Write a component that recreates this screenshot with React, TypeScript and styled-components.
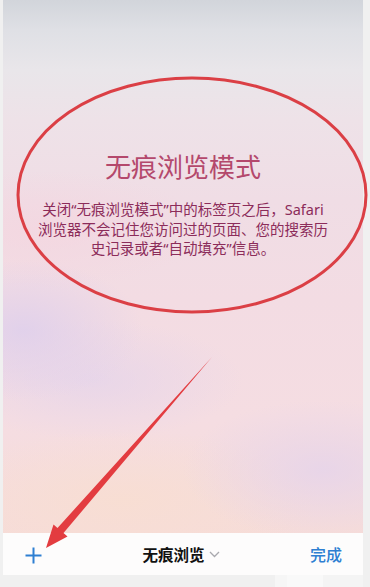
import React from "react";
import styled, { createGlobalStyle } from "styled-components";

const GlobalStyle = createGlobalStyle`
  html, body {
    margin: 0;
    padding: 0;
    background: #f0f0f0;
  }
  body {
    font-family: "Noto Sans", "Noto Sans CJK SC", "Liberation Sans", sans-serif;
  }
`;

const Page = styled.div`
  position: relative;
  width: 370px;
  height: 587px;
  overflow: hidden;
  background: #f0f0f0;
  display: flex;
  flex-direction: column;
`;

const Screen = styled.div`
  margin-left: 3px;
  width: 360px;
  height: 575px;
  display: flex;
  flex-direction: column;
`;

const Content = styled.div`
  flex: 1;
  display: flex;
  flex-direction: column;
  align-items: center;
  padding-top: 150px;
  box-sizing: border-box;
  background:
    radial-gradient(ellipse 120px 70px at 20px 330px, rgba(222, 207, 236, 0.85), rgba(222, 207, 236, 0) 100%),
    radial-gradient(ellipse 150px 60px at 90px 380px, rgba(226, 211, 236, 0.65), rgba(226, 211, 236, 0) 100%),
    radial-gradient(ellipse 140px 70px at 320px 470px, rgba(230, 212, 234, 0.85), rgba(230, 212, 234, 0) 100%),
    radial-gradient(ellipse 200px 70px at 120px 500px, rgba(248, 222, 210, 0.9), rgba(248, 222, 210, 0) 100%),
    radial-gradient(ellipse 160px 60px at 40px 230px, rgba(244, 214, 224, 0.8), rgba(244, 214, 224, 0) 100%),
    linear-gradient(
      to bottom,
      #d2d5db 0px,
      #dfe0e5 30px,
      #e9e6ea 70px,
      #eee2e8 120px,
      #f0dde5 200px,
      #f3dce3 300px,
      #f5dde2 420px,
      #f6dcd9 533px
    );
`;

const Title = styled.h1`
  margin: 0;
  font-family: "Noto Sans CJK SC", sans-serif;
  font-size: 26px;
  line-height: 32px;
  font-weight: 400;
  color: #b4486c;
`;

const Description = styled.div`
  margin-top: 18px;
  display: flex;
  flex-direction: column;
  align-items: center;
  font-size: 14.5px;
  line-height: 19.5px;
  color: #8c2c5a;
`;

const Line = styled.span`
  white-space: nowrap;
`;

const Toolbar = styled.div`
  height: 42px;
  background: #fdfcfc;
  display: grid;
  grid-template-columns: 1fr auto 1fr;
  align-items: center;
  padding: 0 21px;
`;

const PlusButton = styled.button`
  justify-self: start;
  width: 19px;
  height: 19px;
  padding: 0;
  border: 0;
  background: none;
  margin-top: 3px;
  display: flex;
`;

const TabTitle = styled.div`
  display: flex;
  align-items: center;
  gap: 4px;
  font-family: "Noto Sans CJK SC", sans-serif;
  font-size: 15.5px;
  font-weight: 700;
  color: #111;
  margin-left: -4px;
`;

const Done = styled.button`
  justify-self: end;
  border: 0;
  background: none;
  padding: 0;
  font-family: "Noto Sans CJK SC", sans-serif;
  font-size: 16px;
  font-weight: 500;
  color: #2e7fd2;
`;

const Footer = styled.div`
  height: 12px;
  display: flex;
  justify-content: flex-end;
`;

const Smudge = styled.div<{ $w: number; $tone: string }>`
  width: ${(p) => p.$w}px;
  background: ${(p) => p.$tone};
`;

const Annotations = styled.svg`
  position: absolute;
  top: 0;
  left: 0;
  pointer-events: none;
`;

const lines = [
  "关闭“无痕浏览模式”中的标签页之后，Safari",
  "浏览器不会记住您访问过的页面、您的搜索历",
  "史记录或者“自动填充”信息。",
];

const App = () => {
  return (
    <>
      <GlobalStyle />
      <Page>
        <Screen>
          <Content>
            <Title>无痕浏览模式</Title>
            <Description>
              {lines.map((l) => (
                <Line key={l}>{l}</Line>
              ))}
            </Description>
          </Content>
          <Toolbar>
            <PlusButton aria-label="新建">
              <svg width="19" height="19" viewBox="0 0 19 19">
                <path d="M9.5 1.5v16M1.5 9.5h16" stroke="#2e7fd2" strokeWidth="2" fill="none" />
              </svg>
            </PlusButton>
            <TabTitle>
              无痕浏览
              <svg width="11" height="7" viewBox="0 0 11 7">
                <path d="M1 1l4.5 4.5L10 1" stroke="#a9a9ae" strokeWidth="1.3" fill="none" />
              </svg>
            </TabTitle>
            <Done>完成</Done>
          </Toolbar>
        </Screen>
        <Footer>
          <Smudge $w={12} $tone="#f6f6f6" />
          <Smudge $w={36} $tone="#f9f9f9" />
          <Smudge $w={40} $tone="#f4f4f4" />
          <Smudge $w={7} $tone="#f0f0f0" />
        </Footer>
        <Annotations width="370" height="587" viewBox="0 0 370 587">
          <ellipse
            cx="192"
            cy="195"
            rx="174"
            ry="117"
            fill="none"
            stroke="#db3f45"
            strokeWidth="3"
          />
          <polygon
            points="212,357 63.5,533 67.5,536.5 46,548 53.5,524.5 57.5,528"
            fill="#e33c40"
          />
        </Annotations>
      </Page>
    </>
  );
};

export default App;
